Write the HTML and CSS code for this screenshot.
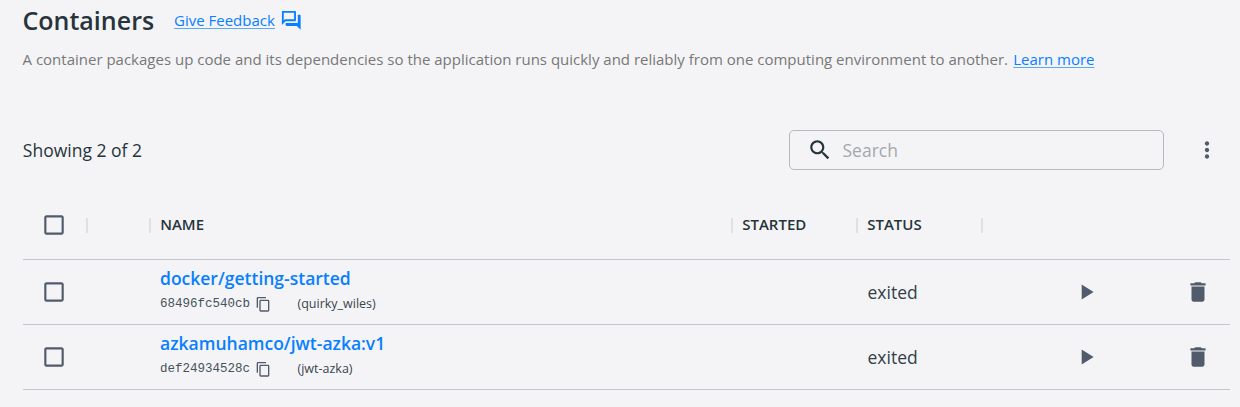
FILE: index.html
```html
<!DOCTYPE html>
<html lang="en">
<head>
<meta charset="utf-8">
<title>Containers</title>
<link rel="stylesheet" href="styles.css">
</head>
<body>
<svg class="defs" width="0" height="0">
  <symbol id="box" viewBox="0 0 24 24"><path d="M19 5v14H5V5h14m0-2H5c-1.100 0-2 .9-2 2v14c0 1.100.9 2 2 2h14c1.100 0 2-.9 2-2V5c0-1.100-.9-2-2-2z"/></symbol>
  <symbol id="copy" viewBox="0 0 24 24"><path d="M16 1H4c-1.100 0-2 .9-2 2v14h2V3h12V1zm3 4H8c-1.100 0-2 .9-2 2v14c0 1.100.9 2 2 2h11c1.100 0 2-.9 2-2V7c0-1.100-.9-2-2-2zm0 16H8V7h11v14z"/></symbol>
  <symbol id="play" viewBox="0 0 24 24"><path d="M8 5v14l11-7z"/></symbol>
  <symbol id="trash" viewBox="0 0 24 24"><path d="M6 19c0 1.100.9 2 2 2h8c1.100 0 2-.9 2-2V7H6v12zM19 4h-3.500l-1-1h-5l-1 1H5v2h14V4z"/></symbol>
</svg>
<main class="page">
  <header class="title-row">
    <h1 class="title">Containers</h1>
    <a class="link feedback">Give Feedback</a>
    <svg class="chat" viewBox="0 0 24 24"><path d="M15 4v7H5.170L4 12.170V4h11m1-2H3c-.55 0-1 .45-1 1v14l4-4h10c.55 0 1-.45 1-1V3c0-.55-.45-1-1-1zm5 4h-2v9H6v2c0 .55.45 1 1 1h11l4 4V7c0-.55-.45-1-1-1z"/></svg>
  </header>
  <p class="intro"><span class="intro-text">A container packages up code and its dependencies so the application runs quickly and reliably from one computing environment to another.</span><a class="link more">Learn more</a></p>
  <div class="toolbar">
    <span class="count">Showing 2 of 2</span>
    <div class="search">
      <svg class="icon search-icon" viewBox="0 0 24 24"><path d="M15.500 14h-.79l-.28-.27C15.410 12.590 16 11.110 16 9.500 16 5.910 13.090 3 9.500 3S3 5.910 3 9.500 5.910 16 9.500 16c1.610 0 3.090-.59 4.230-1.570l.27.28v.79l5 4.990L20.490 19l-4.990-5zm-6 0C7.010 14 5 11.990 5 9.500S7.010 5 9.500 5 14 7.010 14 9.500 11.990 14 9.500 14z"/></svg>
      <span class="placeholder">Search</span>
    </div>
    <svg class="icon menu" viewBox="0 0 24 24"><path d="M12 8c1.100 0 2-.9 2-2s-.9-2-2-2-2 .9-2 2 .9 2 2 2zm0 2c-1.100 0-2 .9-2 2s.9 2 2 2 2-.9 2-2-.9-2-2-2zm0 6c-1.100 0-2 .9-2 2s.9 2 2 2 2-.9 2-2-.9-2-2-2z"/></svg>
  </div>
  <section class="table">
    <div class="row head">
      <div class="cell check"><svg class="icon"><use href="#box"/></svg></div>
      <div class="cell sep"></div>
      <div class="cell sep"><span class="th">NAME</span></div>
      <div class="cell sep"><span class="th">STARTED</span></div>
      <div class="cell sep"><span class="th">STATUS</span></div>
      <div class="cell sep"></div>
    </div>
    <div class="row">
      <div class="cell check"><svg class="icon"><use href="#box"/></svg></div>
      <div class="cell"></div>
      <div class="cell name">
        <a class="image">docker/getting-started</a>
        <div class="meta"><span class="hash">68496fc540cb</span><svg class="copy" viewBox="-0.5 -0.5 24 24"><use href="#copy" width="24" height="24"/></svg><span class="alias">(quirky_wiles)</span></div>
      </div>
      <div class="cell"></div>
      <div class="cell status">exited</div>
      <div class="cell actions"><svg class="icon"><use href="#play"/></svg><svg class="icon"><use href="#trash"/></svg></div>
    </div>
    <div class="row">
      <div class="cell check"><svg class="icon"><use href="#box"/></svg></div>
      <div class="cell"></div>
      <div class="cell name">
        <a class="image">azkamuhamco/jwt-azka:v1</a>
        <div class="meta"><span class="hash">def24934528c</span><svg class="copy" viewBox="-0.5 -0.5 24 24"><use href="#copy" width="24" height="24"/></svg><span class="alias">(jwt-azka)</span></div>
      </div>
      <div class="cell"></div>
      <div class="cell status">exited</div>
      <div class="cell actions"><svg class="icon"><use href="#play"/></svg><svg class="icon"><use href="#trash"/></svg></div>
    </div>
  </section>
</main>
</body>
</html>
```

FILE: styles.css
```css
* { box-sizing: border-box; }
body {
  margin: 0;
  height: 407px;
  overflow: hidden;
  background: #f4f4f6;
  color: #27343b;
  font-family: "Open Sans", "Noto Sans", sans-serif;
}
.defs { display: block; height: 0; }
svg { fill: currentColor; flex: none; overflow: visible; }
.page { padding: 0 10px 0 23px; white-space: nowrap; }
.title-row { display: flex; align-items: center; height: 41px; }
.title { margin: 0; width: 151px; font-size: 25px; font-weight: 600; line-height: 41px; text-indent: -0.5px; }
.link { color: #087fff; font-size: 15px; text-decoration: underline; text-decoration-color: #5ba9fb; text-decoration-thickness: 1px; text-underline-offset: 2px; }
.feedback { padding-bottom: 2px; }
.chat { width: 22.5px; height: 22.5px; margin-left: 5px; color: #087fff; }
.intro { display: flex; align-items: center; margin: 0; height: 38px; padding-bottom: 2px; font-size: 15px; color: #787878; text-indent: -0.5px; }
.more { margin-left: 5.700px; }
.toolbar { display: flex; align-items: center; height: 40px; margin-top: 51px; }
.count { width: 766px; font-size: 17.5px; text-indent: -0.2px; }
.search { display: flex; align-items: center; width: 375px; height: 40px; padding-left: 17px; border: 1px solid #b7b9bd; border-radius: 5px; font-size: 17.5px; }
.placeholder { margin-left: 9.5px; color: #a5a8ab; }
.icon { width: 26px; height: 26px; color: #505b6b; }
.search-icon { color: #27343b; }
.menu { margin-left: 30px; }
.table { margin-top: 21px; }
.row { display: grid; grid-template-columns: 63px 63px 582px 125px 125px 1fr; height: 65px; border-bottom: 1px solid #c1c6d0; }
.row:last-child { border-bottom-color: #c4c6cc; }
.head { height: 69px; }
.cell { display: flex; align-items: center; min-width: 0; }
.check { padding-left: 18px; }
.sep::before { content: ""; width: 2px; height: 15px; background: #dfe0e3; }
.th { margin-left: 9.2px; padding-bottom: 1px; font-size: 15px; font-weight: 600; line-height: 21px; }
.name { flex-direction: column; align-items: flex-start; padding: 5px 0 0 11px; }
.image { color: #087fff; font-size: 17.5px; font-weight: 600; line-height: 26px; }
.meta { display: flex; align-items: center; height: 25px; }
.hash { font: 12.5px "Liberation Mono", monospace; color: #46525a; }
.copy { width: 16px; height: 16px; margin: 1px 0 0 5px; color: #505b6b; }
.alias { margin-left: 26.5px; padding-bottom: 1px; font-size: 12.5px; color: #39454c; }
.status { padding-left: 11.5px; font-size: 17.5px; color: #334047; }
.actions { justify-content: space-between; padding: 0 19px 0 92px; }
```
